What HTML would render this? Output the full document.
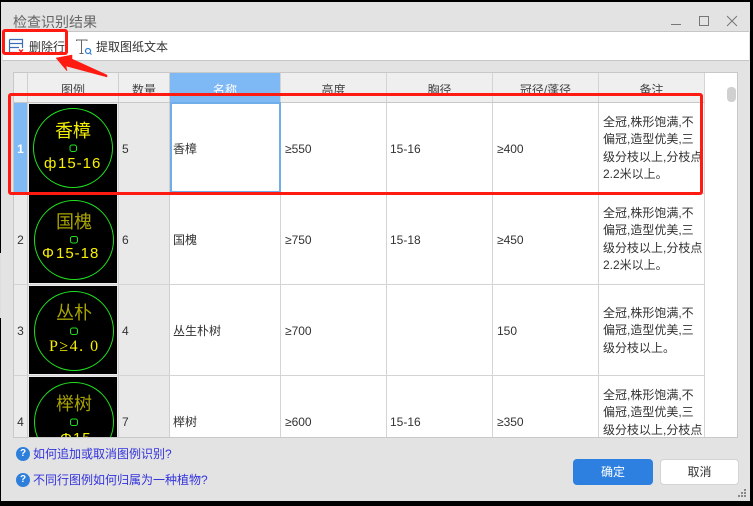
<!DOCTYPE html>
<html><head><meta charset="utf-8">
<style>
html,body{margin:0;padding:0;background:#000;}
body{width:753px;height:506px;position:relative;overflow:hidden;font-family:"Liberation Sans","Noto Sans CJK SC",sans-serif;font-size:12px;color:#333;}
.a{position:absolute;}
.t{position:absolute;white-space:nowrap;line-height:16px;}
.c{text-align:center;}
</style></head>
<body>
<div class="a" style="left:1px;top:2px;width:749px;height:499px;background:#e3e3e3;"></div>
<div class="a" style="left:0;top:253px;width:1px;height:65px;background:#ddd;"></div>
<div class="t" style="left:13px;top:14px;font-size:14px;color:#666;">检查识别结果</div>
<svg class="a" style="left:665px;top:10px" width="80" height="20" fill="none" stroke="#777" stroke-width="1"><path d="M6 14.5H16"/><rect x="34.5" y="6.5" width="9" height="9"/><path d="M62 6L72 16M72 6L62 16"/></svg>

<!-- toolbar -->
<div class="a" style="left:3px;top:31px;width:746px;height:30px;background:#fff;border-top:1px solid #c6c6c6;border-bottom:1px solid #c6c6c6;box-sizing:border-box;"></div>
<svg class="a" style="left:8px;top:38px" width="18" height="17" fill="none"><path d="M1.500 1.500H14.500V10M1.500 1.500V14.500H9M1.500 5.500H14.500M1.500 9.500H11" stroke="#3a6fb8" stroke-width="1.200"/><path d="M11 11.500L15 15.500M15 11.500L11 15.500" stroke="#e8262a" stroke-width="1.300"/></svg>
<div class="t" style="left:29px;top:39px;">删除行</div>
<svg class="a" style="left:75px;top:38px" width="18" height="18" fill="none"><path d="M1.500 3V2H12V3M6.500 2V15.500M4.500 15.500H8.500" stroke="#666" stroke-width="1"/><circle cx="13" cy="13" r="2.500" stroke="#2f7fd8" stroke-width="1.200"/><path d="M15 15L16.500 16.500" stroke="#2f7fd8" stroke-width="1.200"/></svg>
<div class="t" style="left:96px;top:39px;">提取图纸文本</div>

<!-- table -->
<div class="a" style="left:13px;top:72px;width:725px;height:366px;background:#fff;border:1px solid #c8c8c8;box-sizing:border-box;"></div>
<div class="a" style="left:14px;top:73px;width:691px;height:29px;background:#efefef;"></div>
<div class="a" style="left:170px;top:73px;width:111px;height:29px;background:#7fb9f5;"></div>
<div class="a" style="left:14px;top:102px;width:105px;height:335px;background:#ebebeb;"></div>
<div class="a" style="left:119px;top:102px;width:51px;height:335px;background:#e9e9e9;"></div>
<div class="a" style="left:14px;top:103px;width:13px;height:90px;background:#80baf5;"></div>
<!-- grid lines -->
<div class="a" style="left:27px;top:73px;width:1px;height:364px;background:#cfcfcf;"></div>
<div class="a" style="left:118px;top:73px;width:1px;height:364px;background:#cfcfcf;"></div>
<div class="a" style="left:169px;top:73px;width:1px;height:364px;background:#cfcfcf;"></div>
<div class="a" style="left:280px;top:73px;width:1px;height:364px;background:#d4d4d4;"></div>
<div class="a" style="left:386px;top:73px;width:1px;height:364px;background:#d4d4d4;"></div>
<div class="a" style="left:492px;top:73px;width:1px;height:364px;background:#d4d4d4;"></div>
<div class="a" style="left:598px;top:73px;width:1px;height:364px;background:#d4d4d4;"></div>
<div class="a" style="left:704px;top:73px;width:1px;height:364px;background:#d4d4d4;"></div>
<div class="a" style="left:14px;top:102px;width:691px;height:1px;background:#c8c8c8;"></div>
<div class="a" style="left:14px;top:193px;width:691px;height:1px;background:#d4d4d4;"></div>
<div class="a" style="left:14px;top:284px;width:691px;height:1px;background:#d4d4d4;"></div>
<div class="a" style="left:14px;top:375px;width:691px;height:1px;background:#d4d4d4;"></div>
<div class="a" style="left:727px;top:87px;width:9px;height:15px;background:#d0d0d0;border-radius:4px;"></div>

<!-- header text (clipped so nothing shows beneath the red line) -->
<div class="a" style="left:14px;top:73px;width:691px;height:21px;overflow:hidden;">
<div class="t c" style="left:14px;top:9px;width:90px;color:#444;">图例</div>
<div class="t c" style="left:105px;top:9px;width:50px;color:#444;">数量</div>
<div class="t c" style="left:156px;top:9px;width:110px;color:#fff;">名称</div>
<div class="t c" style="left:267px;top:9px;width:105px;color:#444;">高度</div>
<div class="t c" style="left:373px;top:9px;width:105px;color:#444;">胸径</div>
<div class="t c" style="left:479px;top:9px;width:105px;color:#444;">冠径/蓬径</div>
<div class="t c" style="left:585px;top:9px;width:105px;color:#444;">备注</div>
</div>

<!-- legend symbols -->
<svg class="a" style="left:29px;top:103px" width="88" height="334" viewBox="0 0 88 334">
<rect x="0" y="1" width="88" height="88" fill="#000"/>
<rect x="0" y="92" width="88" height="88" fill="#000"/>
<rect x="0" y="183" width="88" height="88" fill="#000"/>
<rect x="0" y="274" width="88" height="60" fill="#000"/>
<g fill="none" stroke="#1fe01f" stroke-width="1">
<circle cx="44" cy="45" r="39.500"/><rect x="41" y="42" width="6.500" height="6.500" rx="2"/>
<circle cx="45" cy="137" r="39.500"/><rect x="41.500" y="133.500" width="7" height="6.500" rx="2"/>
<circle cx="45" cy="228" r="39.500"/><rect x="41.500" y="225" width="7" height="6.500" rx="2"/>
<circle cx="45" cy="319" r="39.500"/><rect x="41.500" y="316" width="7" height="6.500" rx="2"/>
</g>
<g font-family="'Noto Sans CJK SC',sans-serif" font-size="18" text-anchor="middle">
<text x="44" y="34" fill="#f4ee00">香樟</text>
<text x="45" y="125" fill="#a8a200">国槐</text>
<text x="45" y="216" fill="#a8a200">丛朴</text>
<text x="45" y="307" fill="#a8a200">榉树</text>
</g>
<g font-family="'Liberation Sans',sans-serif" font-size="15" fill="#f8f000" letter-spacing="1">
<text x="15" y="65">ф</text><text x="29" y="65">15-16</text>
<text x="13" y="155">Φ</text><text x="27" y="155">15-18</text>
<text x="31" y="340">Φ15</text>
<text x="20" y="248" font-size="16" letter-spacing="1.500" font-family="'Liberation Serif',serif">P≥4. 0</text>
</g>
</svg>

<!-- row 1 -->
<div class="t c" style="left:14px;top:141px;width:13px;color:#fff;font-weight:bold;">1</div>
<div class="t" style="left:122px;top:141px;">5</div>
<div class="a" style="left:170px;top:102px;width:111px;height:91px;background:#fff;border:2px solid #70aeea;box-sizing:border-box;"></div>
<div class="t" style="left:173px;top:141px;">香樟</div>
<div class="t" style="left:285px;top:141px;">≥550</div>
<div class="t" style="left:390px;top:141px;">15-16</div>
<div class="t" style="left:497px;top:141px;">≥400</div>
<div class="t" style="left:603px;top:114px;line-height:17.300px;white-space:normal;width:101px;">全冠,株形饱满,不<br>偏冠,造型优美,三<br>级分枝以上,分枝点<br>2.2米以上。</div>
<!-- row 2 -->
<div class="t c" style="left:14px;top:232px;width:13px;">2</div>
<div class="t" style="left:122px;top:232px;">6</div>
<div class="t" style="left:173px;top:232px;">国槐</div>
<div class="t" style="left:285px;top:232px;">≥750</div>
<div class="t" style="left:390px;top:232px;">15-18</div>
<div class="t" style="left:497px;top:232px;">≥450</div>
<div class="t" style="left:603px;top:205px;line-height:17.300px;white-space:normal;width:101px;">全冠,株形饱满,不<br>偏冠,造型优美,三<br>级分枝以上,分枝点<br>2.2米以上。</div>
<!-- row 3 -->
<div class="t c" style="left:14px;top:323px;width:13px;">3</div>
<div class="t" style="left:122px;top:323px;">4</div>
<div class="t" style="left:173px;top:323px;">丛生朴树</div>
<div class="t" style="left:285px;top:323px;">≥700</div>
<div class="t" style="left:497px;top:323px;">150</div>
<div class="t" style="left:603px;top:305px;line-height:17.300px;white-space:normal;width:101px;">全冠,株形饱满,不<br>偏冠,造型优美,三<br>级分枝以上。</div>
<!-- row 4 -->
<div class="t c" style="left:14px;top:414px;width:13px;">4</div>
<div class="t" style="left:122px;top:414px;">7</div>
<div class="t" style="left:173px;top:414px;">榉树</div>
<div class="t" style="left:285px;top:414px;">≥600</div>
<div class="t" style="left:390px;top:414px;">15-16</div>
<div class="t" style="left:497px;top:414px;">≥350</div>
<div class="t" style="left:603px;top:387px;line-height:17.300px;white-space:normal;width:101px;">全冠,株形饱满,不<br>偏冠,造型优美,三<br>级分枝以上,分枝点</div>
<!-- cover for clipped bottom -->
<div class="a" style="left:1px;top:438px;width:749px;height:63px;background:#e3e3e3;"></div>
<div class="a" style="left:13px;top:437px;width:725px;height:1px;background:#c8c8c8;"></div>
<div class="a" style="left:1px;top:438px;width:749px;height:63px;background:#e3e3e3;"></div>

<!-- footer -->
<div class="a" style="left:16px;top:447px;width:14px;height:14px;border-radius:50%;background:#2e7fdc;color:#fff;font-size:10px;font-weight:bold;line-height:14px;text-align:center;">?</div>
<div class="t" style="left:33px;top:446px;color:#3333dd;">如何追加或取消图例识别?</div>
<div class="a" style="left:16px;top:473px;width:14px;height:14px;border-radius:50%;background:#2e7fdc;color:#fff;font-size:10px;font-weight:bold;line-height:14px;text-align:center;">?</div>
<div class="t" style="left:33px;top:472px;color:#3333dd;">不同行图例如何归属为一种植物?</div>
<div class="a" style="left:573px;top:459px;width:80px;height:26px;background:#2e80e0;border-radius:4px;color:#fff;text-align:center;line-height:26px;">确定</div>
<div class="a" style="left:660px;top:459px;width:79px;height:26px;background:#fff;border:1px solid #d4d4d4;box-sizing:border-box;border-radius:4px;text-align:center;line-height:24px;">取消</div>
<svg class="a" style="left:738px;top:489px" width="10" height="10" fill="#888"><rect x="6" y="0" width="2" height="2"/><rect x="3" y="3" width="2" height="2"/><rect x="6" y="3" width="2" height="2"/><rect x="0" y="6" width="2" height="2"/><rect x="3" y="6" width="2" height="2"/><rect x="6" y="6" width="2" height="2"/></svg>

<!-- annotations -->
<div class="a" style="left:2px;top:29px;width:66px;height:26px;border:3px solid #ff1a12;border-radius:3px;box-sizing:border-box;"></div>
<div class="a" style="left:8px;top:93px;width:695px;height:102px;border:3px solid #ff1a12;border-radius:3px;box-sizing:border-box;"></div>
<svg class="a" style="left:50px;top:50px" width="62" height="32"><polygon points="6,8 22,5 22,9 57,25 57,27 16,16 17,21" fill="#ff1a12" stroke="#ff1a12" stroke-width="0.500" stroke-linejoin="round"/></svg>
</body></html>
